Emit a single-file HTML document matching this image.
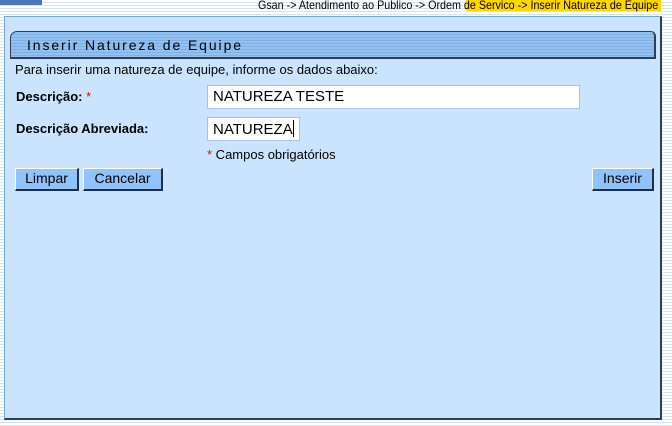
<!DOCTYPE html>
<html><head><meta charset="utf-8"><style>
*{margin:0;padding:0;box-sizing:border-box}
body{width:672px;height:426px;overflow:hidden;font-family:"Liberation Sans",Arial,sans-serif;font-size:13px;color:#000;
background:repeating-linear-gradient(to bottom,#fff 0,#fff 2px,#d3e4f5 2px,#d3e4f5 3px);position:relative}
.topbar{position:absolute;left:0;top:0;width:42px;height:5px;background:#4a78b8}
.crumb{position:absolute;left:0;top:0;width:672px;height:12px}
.crumb .y{position:absolute;left:466px;top:0;width:195px;height:11px;background:#ffd600}
.crumb span{position:absolute;right:14px;top:-2px;font-size:12px;color:#000;white-space:nowrap;transform:scaleX(.895);transform-origin:right}
.panel{position:absolute;left:4px;top:16px;width:658px;height:404px;background:#cbe4fd;border:1px solid #7aa6d6;border-right:2px solid #2b3f5a;border-bottom:2px solid #2b3f5a}
.hdr{position:absolute;left:5px;top:14px;width:646px;height:28px;border:1px solid #2b3f5a;border-right-width:2px;border-bottom-width:2px;border-radius:7px 5px 0 0;
background:repeating-linear-gradient(to bottom,#93c0ef 0,#93c0ef 2px,#7eb1e8 2px,#7eb1e8 3px);}
.hdr span{position:absolute;left:16px;top:5px;font-size:14px;letter-spacing:1.9px;color:#000}
.t{position:absolute;white-space:nowrap}
b{font-weight:bold}
.r{color:#e00}
.in{position:absolute;background:#fff;border:1px solid #a9c2dc;font-size:15px;padding:2px 0 0 5px;white-space:nowrap}
.btn{position:absolute;top:151px;height:23px;background:#90c3fa;border:1px solid #fff;border-right:2px solid #1d2d4a;border-bottom:2px solid #1d2d4a;font-size:14px;text-align:center;line-height:19px}
</style></head><body>
<div class="topbar"></div>
<div class="crumb"><div class="y"></div><span>Gsan -&gt; Atendimento ao Publico -&gt; Ordem de Servico -&gt; Inserir Natureza de Equipe</span></div>
<div class="panel">
<div class="hdr"><span>Inserir Natureza de Equipe</span></div>
<div class="t" style="left:10px;top:45px">Para inserir uma natureza de equipe, informe os dados abaixo:</div>
<div class="t" style="left:11px;top:72px"><b>Descrição:</b> <span class="r">*</span></div>
<div class="in" style="left:202px;top:68px;width:373px;height:24px">NATUREZA TESTE</div>
<div class="t" style="left:11px;top:104px"><b>Descrição Abreviada:</b></div>
<div class="in" style="left:202px;top:100px;width:93px;height:24px">NATUREZA<span style="display:inline-block;width:1px;height:17px;background:#000;vertical-align:-3px"></span></div>
<div class="t" style="left:202px;top:130px"><span class="r">*</span> Campos obrigatórios</div>
<div class="btn" style="left:10px;width:64px">Limpar</div>
<div class="btn" style="left:78px;width:80px">Cancelar</div>
<div class="btn" style="left:587px;width:62px">Inserir</div>
</div>
</body></html>
